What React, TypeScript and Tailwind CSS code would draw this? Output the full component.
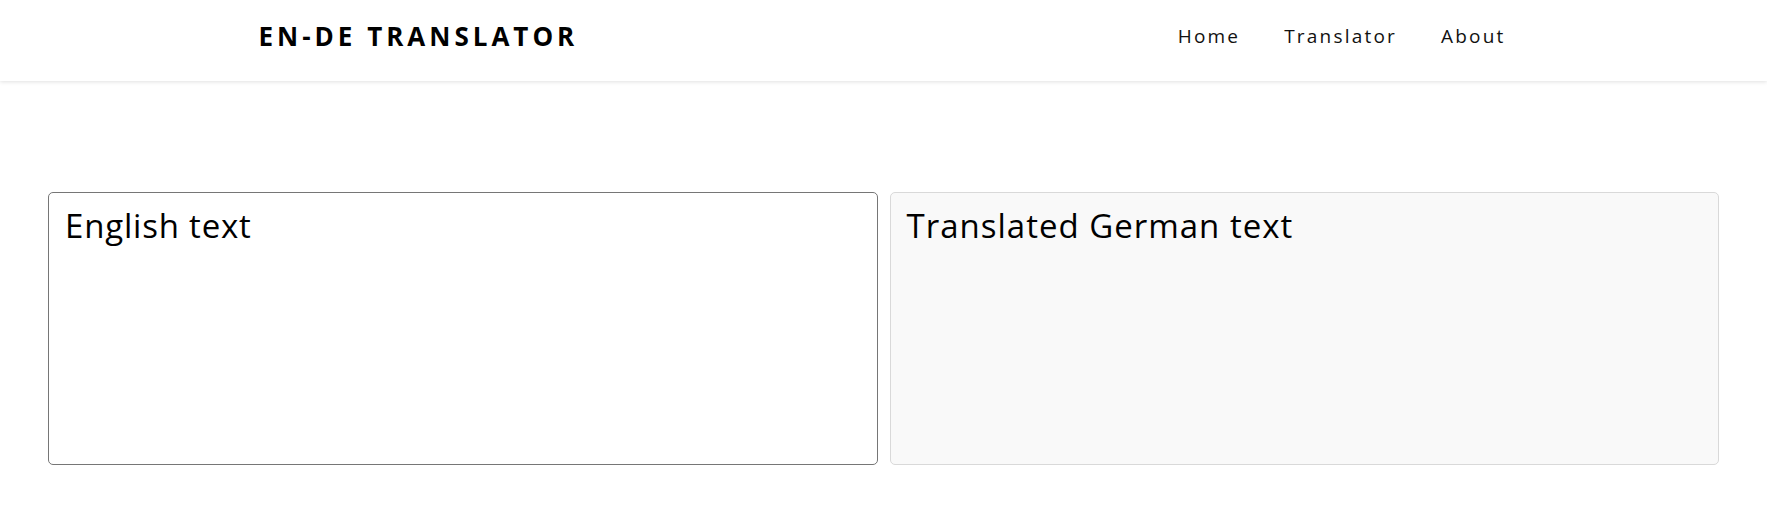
import { useState } from "react";

const font = { fontFamily: '"Open Sans", "Liberation Sans", sans-serif' };

export default function App() {
  const [english, setEnglish] = useState("English text");

  return (
    <div className="min-h-screen bg-white text-black" style={font}>
      {/* top bar */}
      <header className="h-[81px] bg-white shadow-[0_1px_4px_rgba(0,0,0,0.12)]">
        <div className="mx-auto flex h-full max-w-[1250px] items-center justify-between pb-2">
          <h1 className="text-[26px] font-bold tracking-[4px]">EN-DE TRANSLATOR</h1>
          <nav className="flex gap-[44px] pr-[3px] text-[19px] tracking-[2.2px] text-[#111]">
            <a href="#">Home</a>
            <a href="#">Translator</a>
            <a href="#">About</a>
          </nav>
        </div>
      </header>

      {/* text areas */}
      <main className="grid grid-cols-2 gap-3 px-12 pt-[111px]">
        <textarea
          value={english}
          onChange={(e) => setEnglish(e.target.value)}
          className="h-[273px] resize-none rounded-[5px] border border-[#767676] bg-white px-4 py-2 text-[33px] tracking-[0.8px] text-black outline-none"
          style={font}
        />
        <textarea
          readOnly
          value="Translated German text"
          className="h-[273px] resize-none rounded-[5px] border border-[#d9d9d9] bg-[#f9f9f9] px-4 py-2 text-[33px] tracking-[1px] text-black outline-none"
          style={font}
        />
      </main>
    </div>
  );
}
